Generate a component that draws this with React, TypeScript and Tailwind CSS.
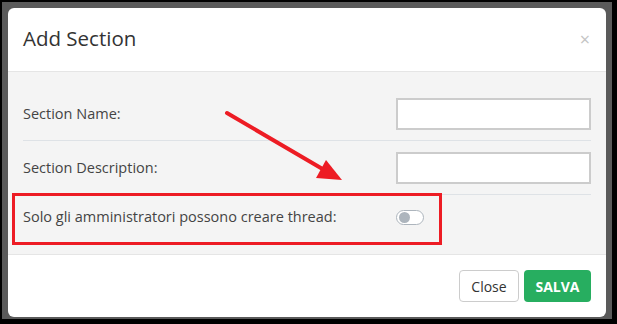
import React from "react";

function Toggle() {
  return (
    <div className="flex h-[15px] w-[28px] items-center rounded-full border border-[#adb5bd] bg-white px-[2px]">
      <div className="h-[11px] w-[11px] rounded-full bg-[#adb5bd]" />
    </div>
  );
}

function Row({ label, children, last }: { label: string; children: React.ReactNode; last?: boolean }) {
  return (
    <div
      className={
        "grid grid-cols-[1fr_195px] items-center " +
        (last ? "h-[44px]" : "h-[54px] border-b border-[#dee2e6]")
      }
    >
      <span className="text-[14.5px] text-[#444]">{label}</span>
      <div>{children}</div>
    </div>
  );
}

export default function App() {
  return (
    <div className="relative h-[324px] w-[617px] bg-black pl-[2px] pr-[5px] pt-[2px] pb-[5px] font-['Open_Sans',sans-serif]">
      <div className="h-full bg-[#5a5a5a] px-[6px] pt-[6px]">
        <div className="flex h-[309px] flex-col overflow-hidden rounded-[6px] bg-white">
          {/* header */}
          <div className="flex h-[64px] shrink-0 items-center justify-between border-b border-[#e5e5e5] pb-[2px] pl-[15px] pr-[16px]">
            <h2 className="text-[20.5px] font-normal text-[#333]">Add Section</h2>
            <span className="text-[18px] leading-none text-[#c4c4c4]">×</span>
          </div>

          {/* body */}
          <div className="h-[183px] shrink-0 border-b border-[#e5e5e5] bg-[#f4f4f4] px-[15px] pt-[15px]">
            <Row label="Section Name:">
              <div className="h-[32px] w-[195px] border-2 border-[#cccccc] bg-white" />
            </Row>
            <Row label="Section Description:">
              <div className="h-[32px] w-[195px] border-2 border-[#cccccc] bg-white" />
            </Row>
            <Row label="Solo gli amministratori possono creare thread:" last>
              <Toggle />
            </Row>
          </div>

          {/* footer */}
          <div className="flex flex-1 items-center justify-end gap-[5px] pr-[15px]">
            <button className="h-[32px] w-[60px] rounded-[4px] border border-[#cccccc] bg-white text-[14px] text-[#333]">
              Close
            </button>
            <button className="h-[32px] w-[67px] rounded-[4px] bg-[#27ae60] text-[14px] font-bold text-white">
              SALVA
            </button>
          </div>
        </div>
      </div>

      {/* annotation: red box */}
      <div className="absolute left-[12px] top-[193px] h-[52px] w-[430px] border-[3px] border-[#ed1c24]" />

      {/* annotation: arrow */}
      <svg className="absolute left-0 top-0" width="617" height="324" viewBox="0 0 617 324">
        <line x1="227" y1="113" x2="326" y2="171" stroke="#ed1c24" strokeWidth="4" strokeLinecap="round" />
        <polygon points="326,160 316,178 342,180" fill="#ed1c24" />
      </svg>
    </div>
  );
}
